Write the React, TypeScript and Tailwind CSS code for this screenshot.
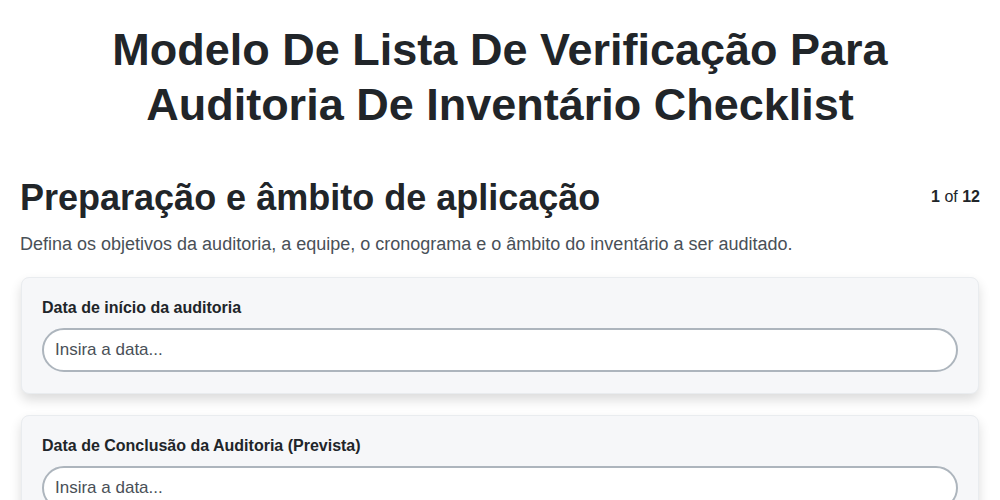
import { useState } from "react";

const fields = [
  { label: "Data de início da auditoria", placeholder: "Insira a data..." },
  { label: "Data de Conclusão da Auditoria (Prevista)", placeholder: "Insira a data..." },
  { label: "Auditor responsável", placeholder: "Insira o nome..." },
];

export default function App() {
  const [values, setValues] = useState<string[]>(fields.map(() => ""));

  return (
    <div className="min-h-screen bg-white font-['Liberation_Sans',Arial,sans-serif] text-[#212529]">
      <h1 className="px-5 pt-[22px] text-center text-[45px] font-bold leading-[55px]">
        Modelo De Lista De Verificação Para
        <br />
        Auditoria De Inventário Checklist
      </h1>

      <section className="mt-[45px] px-5">
        <div className="flex items-start justify-between gap-4">
          <h2 className="text-[36px] font-bold leading-[42px]">Preparação e âmbito de aplicação</h2>
          <span className="pt-[8px] text-[16px] text-[#212529]">
            <b>1</b> of <b>12</b>
          </span>
        </div>
        <p className="mt-[12px] text-[18px] leading-[26px] text-[#495057]">
          Defina os objetivos da auditoria, a equipe, o cronograma e o âmbito do inventário a ser auditado.
        </p>

        <div className="mt-[20px] grid gap-[21px]">
          {fields.map((field, i) => (
            <div
              key={field.label}
              className="mx-px rounded-lg border border-[#e9ecef] bg-[#f6f7f9] px-5 pb-[21px] pt-[20px] shadow-[0_6px_12px_rgba(0,0,0,0.14)]"
            >
              <label className="block text-[16px] font-bold leading-[20px]">{field.label}</label>
              <input
                value={values[i]}
                onChange={(e) => setValues(values.map((v, j) => (j === i ? e.target.value : v)))}
                placeholder={field.placeholder}
                className="mt-[10px] block h-[44px] w-full rounded-full border-2 border-[#adb5bd] bg-white px-[11px] text-[17px] text-[#212529] outline-none placeholder:text-[#495057]"
              />
            </div>
          ))}
        </div>
      </section>
    </div>
  );
}
